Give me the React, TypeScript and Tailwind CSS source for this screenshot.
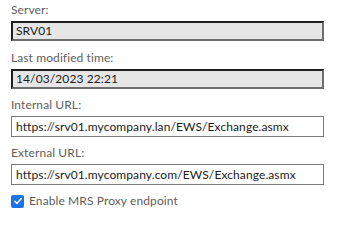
import React from 'react';

const FONT = { fontFamily: 'Lato, "Noto Sans", sans-serif' };

function Label({ children }: { children: React.ReactNode }) {
  return <div className="h-[16px] text-[12px] leading-[16px] tracking-[0.1px] text-[#605e5c]">{children}</div>;
}

function ReadOnlyBox({ value }: { value: string }) {
  return (
    <div className="mt-[3px] flex h-[20px] w-[313px] items-center border-2 border-t-[#1f1f1f] border-l-[#1f1f1f] border-r-[#6e6e6e] border-b-[#6e6e6e] bg-[#e6e6e6] pl-[3px] text-[12px] tracking-[0.1px] text-[#1b1b1b]">
      {value}
    </div>
  );
}

function TextBox({ value }: { value: string }) {
  return (
    <div className="mt-[3px] flex h-[21px] w-[313px] items-center border border-[#7a7a7a] bg-white pl-[4px] text-[12px] tracking-[0.1px] text-[#1b1b1b]">
      {value}
    </div>
  );
}

export default function App() {
  return (
    <div className="h-[214px] w-[337px] bg-white pl-[11px] pt-[2px]" style={FONT}>
      <Label>Server:</Label>
      <ReadOnlyBox value="SRV01" />
      <div className="mt-[9px]">
        <Label>Last modified time:</Label>
        <ReadOnlyBox value="14/03/2023 22:21" />
      </div>
      <div className="mt-[8px]">
        <Label>Internal URL:</Label>
        <TextBox value="https://srv01.mycompany.lan/EWS/Exchange.asmx" />
      </div>
      <div className="mt-[8px]">
        <Label>External URL:</Label>
        <TextBox value="https://srv01.mycompany.com/EWS/Exchange.asmx" />
      </div>
      <div className="mt-[8px] flex items-center gap-[5px]">
        <span className="flex h-[13px] w-[13px] items-center justify-center rounded-[2px] bg-[#1a73e8]">
          <svg viewBox="0 0 12 12" className="h-[10px] w-[10px]">
            <path d="M2.2 6.3 L4.8 8.8 L9.8 3.2" fill="none" stroke="white" strokeWidth="1.9" strokeLinecap="round" strokeLinejoin="round" />
          </svg>
        </span>
        <span className="text-[12px] leading-[16px] tracking-[0.1px] text-[#605e5c]">Enable MRS Proxy endpoint</span>
      </div>
    </div>
  );
}
